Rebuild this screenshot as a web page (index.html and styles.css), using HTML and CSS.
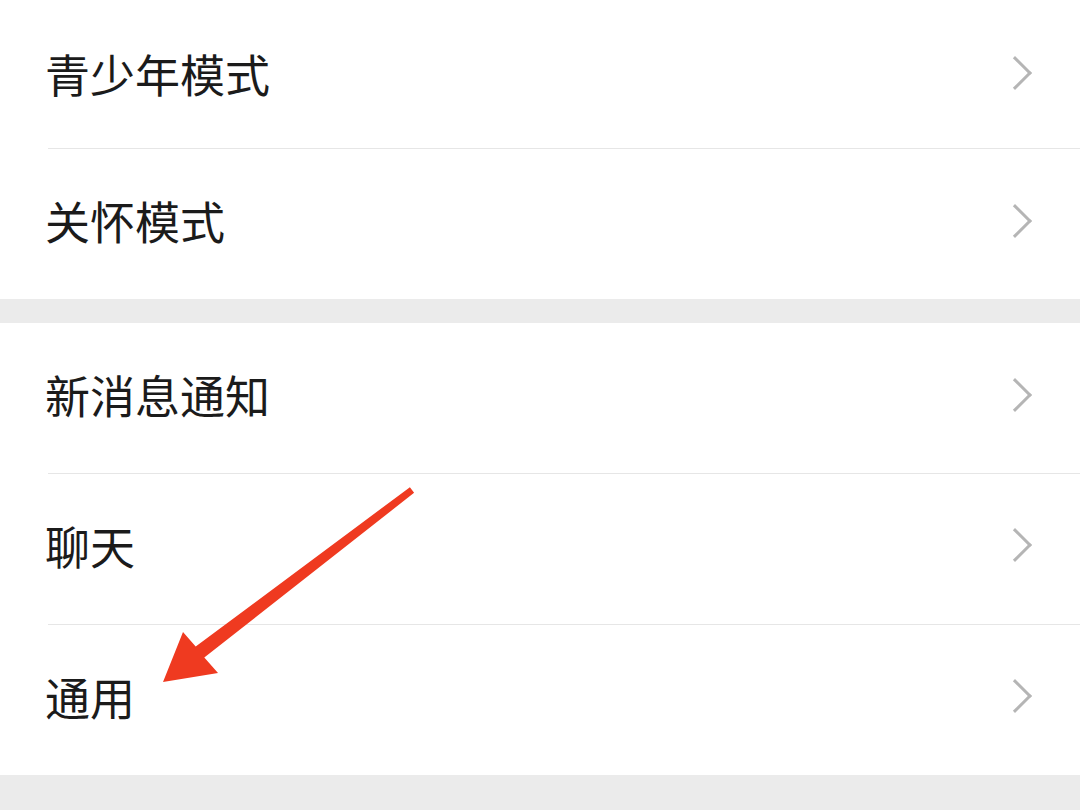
FILE: index.html
```html
<!DOCTYPE html>
<html lang="zh-CN">
<head>
<meta charset="UTF-8">
<meta name="viewport" content="width=device-width, initial-scale=1.0">
<title>设置</title>
<link rel="stylesheet" href="styles.css">
</head>
<body>
    <!-- Group 1 -->
    <div class="group">
        <div class="row row-first"><span class="label">青少年模式</span><span class="chevron"></span></div>
        <div class="row row-second"><span class="label">关怀模式</span><span class="chevron"></span></div>
    </div>

    <!-- Group 2 -->
    <div class="group">
        <div class="row"><span class="label">新消息通知</span><span class="chevron"></span></div>
        <div class="row row-tall"><span class="label">聊天</span><span class="chevron"></span></div>
        <div class="row row-tall"><span class="label">通用</span><span class="chevron"></span></div>
    </div>

    <!-- Red annotation arrow -->
    <svg class="arrow" width="1080" height="810" viewBox="0 0 1080 810">
        <polygon fill="#ef3a20" points="409.9,487.2 414.1,492.8 204.3,657.5 218,673 163,682 183,632 195.7,646.5"/>
    </svg>
</body>
</html>
```

FILE: styles.css
```css
/* General Reset */
* {
    margin: 0;
    padding: 0;
    box-sizing: border-box;
}

body {
    width: 1080px;
    height: 810px;
    background-color: #ebebeb;
    font-family: "Noto Sans CJK SC", "Noto Sans", sans-serif;
    overflow: hidden;
    position: relative;
}

/* Groups */
.group {
    background-color: #fff;
    margin-bottom: 24px;
}

.row {
    display: flex;
    align-items: center;
    justify-content: space-between;
    height: 149.5px;
    padding: 0 46px 6px 45px;
    position: relative;
}

.row-first {
    height: 148px;
    padding-top: 2px;
    padding-bottom: 4px;
}

.row-second {
    height: 151px;
}

.row-tall {
    height: 151px;
}

/* Inset divider */
.row + .row::before {
    content: "";
    position: absolute;
    top: 0;
    left: 48px;
    right: 0;
    height: 1px;
    background-color: #e6e6e6;
}

.label {
    font-size: 45px;
    color: #1b1b1b;
}

/* Chevron */
.chevron {
    width: 24px;
    height: 24px;
    border-top: 3px solid #b5b5b5;
    border-right: 3px solid #b5b5b5;
    transform: rotate(45deg);
    margin-right: 7px;
}

/* Annotation */
.arrow {
    position: absolute;
    top: 0;
    left: 0;
    pointer-events: none;
}
```
